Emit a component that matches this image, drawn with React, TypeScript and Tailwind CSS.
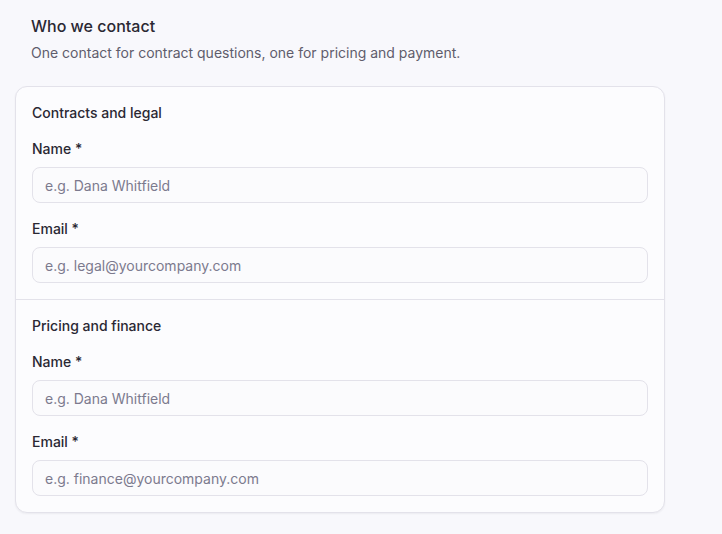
import React from "react";

type Field = { label: string; placeholder: string };

const sections: { title: string; fields: Field[] }[] = [
  {
    title: "Contracts and legal",
    fields: [
      { label: "Name *", placeholder: "e.g. Dana Whitfield" },
      { label: "Email *", placeholder: "e.g. legal@yourcompany.com" },
    ],
  },
  {
    title: "Pricing and finance",
    fields: [
      { label: "Name *", placeholder: "e.g. Dana Whitfield" },
      { label: "Email *", placeholder: "e.g. finance@yourcompany.com" },
    ],
  },
];

const App: React.FC = () => {
  return (
    <div
      className="min-h-screen bg-[#f8f8fc] px-[15px] pt-[14px] text-[#27252f]"
      style={{ fontFamily: "Inter, 'Noto Sans', sans-serif" }}
    >
      <div className="px-4">
        <h2 className="text-[16px] leading-6 font-medium text-[#2a2833]">
          Who we contact
        </h2>
        <p className="mt-[5px] text-[14px] leading-5 text-[#5f5d6c]">
          One contact for contract questions, one for pricing and payment.
        </p>
      </div>

      <div className="mt-[23px] w-[650px] rounded-xl border border-[#e3e2ea] bg-[#fcfcfe] shadow-[0_1px_2px_rgba(30,28,50,0.06)]">
        {sections.map((section, i) => (
          <div
            key={section.title}
            className={`px-4 py-4 ${i > 0 ? "border-t border-[#e3e2ea]" : ""}`}
          >
            <h3 className="text-[14px] leading-5 font-medium text-[#2a2833]">
              {section.title}
            </h3>
            {section.fields.map((field) => (
              <div key={field.placeholder} className="mt-4">
                <label className="block text-[14px] leading-5 font-medium text-[#2a2833]">
                  {field.label}
                </label>
                <input
                  type="text"
                  placeholder={field.placeholder}
                  className="mt-2 block h-9 w-full rounded-lg border border-[#e3e2ea] bg-[#fbfbfd] px-3 text-[14px] text-[#2a2833] placeholder:text-[#7c7a8e] outline-none"
                />
              </div>
            ))}
          </div>
        ))}
      </div>
    </div>
  );
};

export default App;
